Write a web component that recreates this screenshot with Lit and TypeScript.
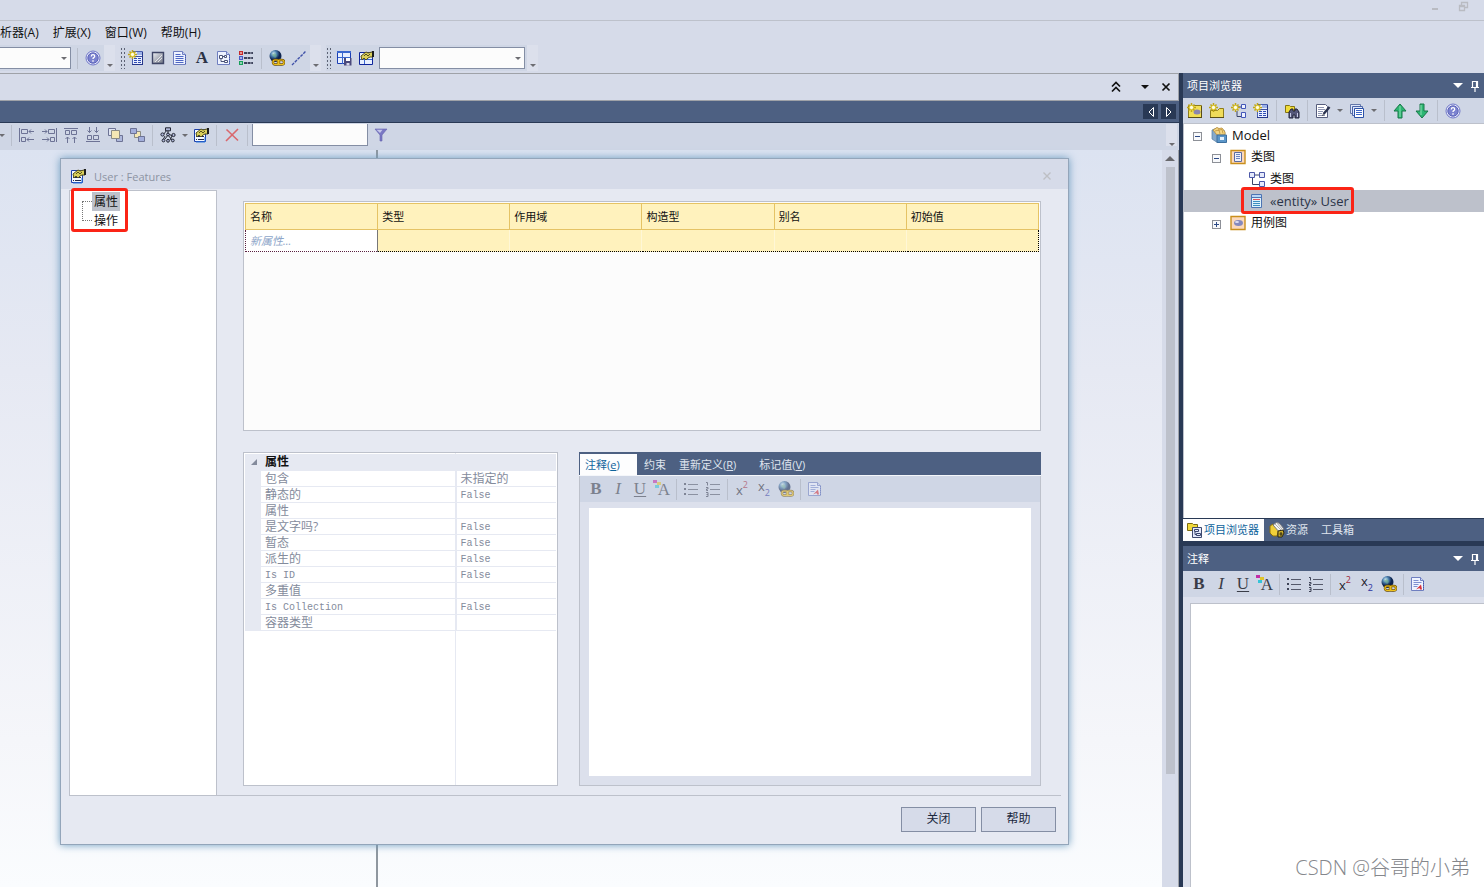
import { LitElement, html, svg, css, TemplateResult } from "lit";
import { customElement, property } from "lit/decorators.js";
import { classMap } from "lit/directives/class-map.js";

const sun = svg`<path d="M4.500 0v9M0 4.500h9M1.500 1.500l6 6M7.500 1.500l-6 6" stroke="#bfa516" stroke-width="1.500"/><circle cx="4.500" cy="4.500" r="2.200" fill="#fffde0" stroke="#d8c020"/>`;
const sheet = svg`<path d="M1.500 1.500h9l3 3v10h-12z" fill="#eef3ff" stroke="#6f7fc0"/><path d="M10.500 1.500v3h3" fill="#c8d2f4" stroke="#6f7fc0"/><path d="M13.500 5v10" stroke="#4459b0" stroke-dasharray="1 1"/>`;
const hand = svg`<path d="M3 6l5-4 2 1 4-1h1v5h-3l-2 1-2 2-2-2-2 2z" fill="#d9cf5c" stroke="#55501c"/><path d="M6 6l2-2 2 2 2-2" fill="none" stroke="#55501c"/><path d="M15 1v6" stroke="#1c1c1c" stroke-width="2"/>`;

const ICONS: Record<string, TemplateResult> = {
  help: svg`<circle cx="8" cy="8" r="7" fill="#e7eafb" stroke="#6f76c8"/><circle cx="8" cy="8" r="5.200" fill="#7b82cf" stroke="#5a62b8"/><path d="M6.300 6.500q0-1.800 1.700-1.800t1.700 1.600q0 .8-.9 1.300t-.8 1.400" fill="none" stroke="#fff" stroke-width="1.300"/><path d="M7.300 10.300h1.400v1.400H7.300z" fill="#fff"/>`,
  newClass: svg`<path d="M4.500 1.500h10v13h-10z" fill="#e9efff" stroke="#4a5fae"/><path d="M9 2h5v3H9z" fill="#9db2e8"/><path d="M5 6.500h9" stroke="#3c50a0"/><path d="M6 8.500h3M10 8.500h3M6 10.500h3M10 10.500h3M6 12.500h3M10 12.500h3" stroke="#2f4cb4"/><path d="M14.500 2v13M4 14.500h11" stroke="#26378a"/>${sun}`,
  shade: svg`<defs><linearGradient id="g" x2="1" y2="1"><stop stop-color="#f2f4f8"/><stop offset="1" stop-color="#6a7080"/></linearGradient></defs><path d="M2.500 2.500h11v11h-11z" fill="url(#g)" stroke="#3f4666" stroke-width="1.400"/><path d="M5 12l7-7M8 12l4-4" stroke="#fff" stroke-width=".7"/>`,
  sheet: svg`${sheet}<path d="M3.500 4.500h5M3.500 6.500h8M3.500 8.500h8M3.500 10.500h8M3.500 12.500h8" stroke="#4d66c4"/>`,
  diagramSheet: svg`${sheet}<path d="M3.500 5.500h3v3h-3zM8.500 5.500h2v2h-2zM8.500 10.500h3v2h-3zM5 8.500v3h3.500M6.500 6.500h2" fill="#fff" stroke="#4b5478"/>`,
  legend: svg`<path d="M1 1h4v4H1z" fill="#c62828"/><path d="M1 6h4v4H1z" fill="#4a5dc8"/><path d="M1 11h4v4H1z" fill="#16a05a"/><path d="M2.300 2.300h1.400v1.400H2.300zM2.300 7.300h1.400v1.400H2.300zM2.300 12.300h1.400v1.400H2.300z" fill="#fff"/><path d="M6 3h9M6 8h9M6 13h9" stroke="#3e445c" stroke-width="2" stroke-dasharray="3 .6"/>`,
  globe: svg`<defs><radialGradient id="e" cx=".35" cy=".3"><stop stop-color="#d4ecf4"/><stop offset=".5" stop-color="#4a7fae"/><stop offset="1" stop-color="#0d2450"/></radialGradient></defs><circle cx="6.500" cy="6" r="6" fill="url(#e)"/><path d="M3 5q2-3 4-1t-1 4z" fill="#6fb08c" opacity=".6"/><rect x="4" y="10" width="6" height="4.500" rx="2" fill="none" stroke="#6b4d06" stroke-width="2.400"/><rect x="9" y="10" width="6" height="4.500" rx="2" fill="none" stroke="#6b4d06" stroke-width="2.400"/><rect x="4" y="10" width="6" height="4.500" rx="2" fill="none" stroke="#f0c21c" stroke-width="1.200"/><rect x="9" y="10" width="6" height="4.500" rx="2" fill="none" stroke="#f0c21c" stroke-width="1.200"/>`,
  line: svg`<path d="M1 15L15 1" stroke="#3f51a8" stroke-width="1.400" stroke-dasharray="3 1"/>`,
  layoutSave: svg`<path d="M1.500 1.500h13v12h-13z" fill="#e8f0ff" stroke="#1c3fb4"/><path d="M1 1h14v2H1zM6 2h1v12H6zM2 7h12v1H2z" fill="#3a67cf"/><path d="M8 8h7.500v7.500H8z" fill="#4a4a7c"/><path d="M10 8h4v3h-4z" fill="#fff"/><path d="M10.500 13h3v2.500h-3z" fill="#d8d8ea"/>`,
  layoutHand: svg`<path d="M1.500 2.500h13v12h-13z" fill="#e8f0ff" stroke="#10269c"/><path d="M6 8h1v6H6zM2 9h12v1H2z" fill="#3a67cf"/>${hand}`,
  props: svg`<path d="M1.500 2.500h11v12h-11z" fill="#f4f8ff" stroke="#1c3fa8"/><path d="M3 9.500h1M3 12.500h1M5 9.500h6M5 12.500h6" stroke="#222a4c"/><path d="M12 10v5H3" fill="none" stroke="#2b76e0"/>${hand}`,
  alignLeft: svg`<path d="M.5 1v14" stroke="#6d7395"/><path d="M2.500 2.500h6v4h-6zM2.500 10.500h4v4h-4zM15 4.500h-5M12 2.500l-2 2 2 2M15 12.500h-7M10 10.500l-2 2 2 2" fill="none" stroke="#6d7395"/>`,
  alignRight: svg`<path d="M15.500 1v14" stroke="#6d7395"/><path d="M7.500 2.500h6v4h-6zM9.500 10.500h4v4h-4zM1 4.500h5M4 2.500l2 2-2 2M1 12.500h7M6 10.500l2 2-2 2" fill="none" stroke="#6d7395"/>`,
  alignTop: svg`<path d="M1 1.500h14" stroke="#6d7395"/><path d="M2.500 3.500h4v4h-4zM8.500 3.500h5v4h-5zM4.500 16v-6M2.500 12l2-2 2 2M11.500 16v-6M9.500 12l2-2 2 2" fill="none" stroke="#6d7395"/>`,
  alignBottom: svg`<path d="M1 14.500h14" stroke="#6d7395"/><path d="M2.500 8.500h4v4h-4zM8.500 8.500h5v4h-5zM4.500 0v5.500M2.500 3.500l2 2 2-2M11.500 0v5.500M9.500 3.500l2 2 2-2" fill="none" stroke="#6d7395"/>`,
  front: svg`<path d="M1.500 1.500h7v7h-7z" fill="#dfe4f2" stroke="#6d7395"/><path d="M9.500 8.500h6v6h-6z" fill="#aeb8dc" stroke="#6d7395"/><path d="M4.500 3.500h8v8h-8z" fill="#f4e7b4" stroke="#8a8b85"/>`,
  back: svg`<path d="M5.500 4.500h6v6h-6z" fill="#f4e7b4" stroke="#8a8b85"/><path d="M1.500 1.500h6v5h-6zM9.500 9.500h6v5h-6z" fill="#a2aedb" stroke="#6d7395"/>`,
  tree: svg`<path d="M7 3L3 8M8 3v5l-3 4M8 7l5 2M5 9l-2 4M12 9l-2 4M8 8l4 5" stroke="#222633" fill="none"/><g fill="#aeb6d8" stroke="#222633"><path d="M5.500.8h5v3h-5z"/><circle cx="2.500" cy="7.500" r="1.600"/><circle cx="13.500" cy="8" r="1.600"/><circle cx="8" cy="7.500" r="1.400"/><circle cx="3.500" cy="13.500" r="1.400"/><circle cx="8" cy="13.800" r="1.400"/><circle cx="12.800" cy="13.500" r="1.400"/></g>`,
  remove: svg`<path d="M2.500 2.500l11.500 11M14 2L2 14" stroke="#d9676d" stroke-width="1.600"/>`,
  filter: svg`<path d="M2 2h12L9 8v6H7V8z" fill="#7a78c4" stroke="#6563ae" stroke-width=".6"/><path d="M3.500 2.800h6L7 6z" fill="#c7c8ea"/>`,
  newModel: svg`<path d="M1.500 2.500h13v12h-13z" fill="#f2df55" stroke="#8d7c1c"/><ellipse cx="10" cy="9" rx="3.500" ry="2.500" fill="#8b86b0"/><path d="M1 14.500h14M14.500 3v12" stroke="#5a4e16"/>${sun}`,
  newPackage: svg`<path d="M1.500 7.500h7l2-2h4v9h-13z" fill="#f0dc5a" stroke="#8d7c1c"/><path d="M1 14.500h14" stroke="#5a4e16"/>${sun}`,
  newDiagram: svg`<path d="M7 4h4M6 8v5.500h4" stroke="#3b4468" fill="none"/><path d="M10.500 1.500h4v4h-4zM10.500 9.500h4v5h-4z" fill="#eef2ff" stroke="#4256b8"/>${sun}`,
  find: svg`<path d="M1.500 2.500h4l1 1h4v6h-9z" fill="#f0dc3a" stroke="#857512"/><path d="M5 15V9l2-3h2v2h2V6h2l2 3v6h-4v-3H9v3z" fill="#55587a" stroke="#20223a"/><path d="M6.500 10v4M13.500 10v4" stroke="#c5c8e4"/>`,
  edit: svg`<path d="M1.500 1.500h9l2 2v11h-11z" fill="#fff" stroke="#565d7c"/><path d="M3 4.500h6M3 6.500h7M3 8.500h5M3 10.500h4M3 12.500h7" stroke="#8e95b2"/><path d="M14.500 4l-6 7" stroke="#2b3350" stroke-width="2.400"/><path d="M7 13l1-2 1 1z" fill="#222"/>`,
  stack: svg`<path d="M1.500 1.500h10v9h-10z" fill="#dfe7fb" stroke="#6377a8"/><path d="M3.500 3.500h10v9h-10z" fill="#dfe7fb" stroke="#4c66a8"/><path d="M5.500 5.500h9v9h-9z" fill="#fff" stroke="#2d52a8"/><path d="M7 7.500h6M7 9.500h6M7 11.500h6" stroke="#3c66c8"/>`,
  up: svg`<path d="M8 1l6 7h-4v7H6V8H2z" fill="#2cb673" stroke="#187848"/><path d="M8 3v11" stroke="#8ce0b4"/>`,
  down: svg`<path d="M8 15L2 8h4V1h4v7h4z" fill="#2cb673" stroke="#187848"/><path d="M7 2v10" stroke="#8ce0b4"/>`,
  model: svg`<path d="M1 3l5-2 2 1v2l5-1 1 4-7 1v8L1 12z" fill="#86a9ca" stroke="#4f7ba5" stroke-width=".7"/><path d="M2 3l4-2.500 2 1 3-.5 3 4v3H6z" fill="#f3d583" stroke="#b78a30" stroke-width=".8"/><path d="M4 4l4-1 1 4M7 3l4-.5 1 4" fill="none" stroke="#b78a30" stroke-width=".7"/><path d="M6 8h9.500v7.500H6z" fill="#5b96c9" stroke="#3c6f9e"/><path d="M9 10h4v3H9z" fill="#e5f0fa"/>`,
  packageClass: svg`<path d="M1 1.500h14v13H1z" fill="#fbd9bd" stroke="#c98f1c" stroke-width="1.400"/><path d="M4.500 3.500h7v9h-7z" fill="#eef1fb" stroke="#5c6ca2"/><path d="M6 5.500h4M6 7.500h4M6 9.500h4" stroke="#6c84c0"/>`,
  packageUse: svg`<path d="M1 1.500h14v13H1z" fill="#fbd9bd" stroke="#c98f1c" stroke-width="1.400"/><ellipse cx="8.500" cy="8" rx="4.500" ry="3" fill="#8589bd"/><ellipse cx="7" cy="7" rx="2" ry="1" fill="#dfe0f5"/>`,
  diagram: svg`<path d="M6 4h4M3.500 7v6.500H10" stroke="#3b4468" fill="none"/><path d="M.5 1.500h5v5h-5zM10.500 1.500h5v5h-5zM10.500 10.500h5v5h-5z" fill="#e4e9fb" stroke="#4c58a8"/>`,
  element: svg`<path d="M2.500 1.500h10v13h-10z" fill="#dff2fb" stroke="#4c74b4"/><path d="M3 2h9v2H3z" fill="#b9d6f4"/><path d="M3 4.500h9" stroke="#4c74b4"/><path d="M4 6.500h7" stroke="#e0525a"/><path d="M4 8.500h7M4 10.500h7M4 12.500h7" stroke="#3f8fc0"/>`,
  browser: svg`<path d="M.5 1.500h5l1 1h4v6H.5z" fill="#f0d83a" stroke="#7a6a10"/><path d="M5.500 5.500h9v10h-9z" fill="#e4e9fb" stroke="#3f4a70"/><path d="M7.500 7.500h4v2h-4zM9.500 11.500h4v2h-4zM8 10v2.500h1" fill="none" stroke="#39456e"/>`,
  resources: svg`<path d="M1 4l3-2 6 5-2 7H4L1 11z" fill="#f0cf3a" stroke="#8a6e10"/><path d="M4 3l4-3 3 2 4 5-4 4z" fill="#f6f6f2" stroke="#77777c"/><path d="M6 2l6 6M8 1l5 6" stroke="#9a9aa0" stroke-width=".8"/><path d="M9 9l5-1 1 3-2 4H9z" fill="#c9ac28" stroke="#2a2613"/><path d="M12 10v4M10.500 12h3" stroke="#2a2613"/>`,
  bullets: svg`<path d="M1 2h2v2H1zM1 7h2v2H1zM1 12h2v2H1z" fill="#3e4356"/><path d="M5 3.500h10M5 8.500h10M5 13.500h10" stroke="#55596a"/>`,
  numbers: svg`<path d="M1 1.500h1.500v3M1 6.500h2v1.500H1.500v1.500H3M1 11.500h2v4H1M1.500 13.500H3" fill="none" stroke="#3e4356"/><path d="M5 3.500h10M5 8.500h10M5 13.500h10" stroke="#55596a"/>`,
  doc: svg`${sheet}<path d="M3.500 4.500h5M3.500 6.500h8M3.500 8.500h5M3.500 10.500h4" stroke="#7f90d0"/><path d="M6 13.500l5-5 1 5h-2l-.5-1.500z" fill="#d8323a"/>`,
  swatches: svg`<path d="M0 0h4v3H0z" fill="#c22ca8"/><path d="M4 2h4v3H4z" fill="#e0c52c"/><path d="M2 5h4v3H2z" fill="#35c3d8"/>`,
  pin: svg`<path d="M5.500 3.500h5v6h-5zM4 9.500h8M8 10v4M9.500 4v5" fill="none" stroke="#fff" stroke-width="1.200"/>`,
  chevrons: svg`<path d="M4 7.500l4-4 4 4M4 12.500l4-4 4 4" fill="none" stroke="#111" stroke-width="1.700"/>`,
  close: svg`<path d="M4.500 4.500l7 7M11.500 4.500l-7 7" stroke="#111" stroke-width="1.700"/>`,
  closeThin: svg`<path d="M4.500 4.500l7 7M11.500 4.500l-7 7" stroke="#bdbfc4" stroke-width="1.400"/>`,
  minimize: svg`<path d="M5 10h6" stroke="#b9bbc2" stroke-width="2"/>`,
  restore: svg`<path d="M6.500 6V3.500h6v5H10M4.500 6.500h5v5h-5zM4.500 7.500h5" fill="none" stroke="#b9bbc2" stroke-width="1.300"/>`,
  prev: svg`<path d="M10.500 3.500v9L6 8z" fill="none" stroke="#fff"/>`,
  next: svg`<path d="M5.500 3.500v9L10 8z" fill="none" stroke="#fff"/>`,
};

const icon = (name: string) => html`<svg class="icon" viewBox="0 0 16 16" width="16" height="16" fill="none" aria-hidden="true">${ICONS[name]}</svg>`;
const tool = (name: string, label: string) => html`<button class="tool" aria-label=${label}>${icon(name)}</button>`;
const arrow = () => html`<button class="drop" aria-label="更多"><i class="caret"></i></button>`;
const sep = () => html`<span class="sep"></span>`;

const shared = css`
  * { box-sizing: border-box; }
  button { font: inherit; color: inherit; background: none; border: 0; padding: 0; margin: 0; }
  .icon { display: block; flex: none; }
  .tool { width: 22px; height: 22px; display: flex; align-items: center; justify-content: center; flex: none; }
  .drop { width: 11px; height: 22px; display: flex; align-items: center; justify-content: center; flex: none; }
  .caret { border: 3px solid transparent; border-top-color: #6d6d72; border-bottom: 0; }
  .sep { width: 1px; height: 21px; margin: 0 4px; background: #b9bfcc; flex: none; }
`;

@customElement("rich-text-bar")
class RichTextBar extends LitElement {
  @property({ type: Boolean, reflect: true }) muted = false;
  static styles = [shared, css`
    :host { display: flex; align-items: center; height: 26px; padding-left: 5px; background: #cfd6e5; font-family: "Liberation Serif", serif; color: #3a3d48; flex: none; }
    :host([muted]) .tool { opacity: 0.55; }
    .sep { margin: 0 3px; }
    .glyph { font-size: 17px; line-height: 20px; }
    .bold { font-weight: bold; }
    .italic { font-style: italic; }
    .under { text-decoration: underline; text-underline-offset: 2px; }
    .script { display: flex; font: 13px/16px "Open Sans", sans-serif; color: #1f222b; }
    .script sup, .script sub { font-size: 9px; line-height: 10px; }
    .script sup { color: #a02838; align-self: flex-start; }
    .script sub { color: #2c35a0; align-self: flex-end; padding-top: 8px; }
    .low { padding-top: 2px; }
    .high { line-height: 12px; }
    .color { position: relative; }
    .color .icon { position: absolute; left: 2px; top: 2px; }
    .color .glyph { padding-left: 4px; padding-top: 2px; }
  `];
  render() {
    return html`
      <button class="tool" aria-label="粗体"><span class="glyph bold">B</span></button>
      <button class="tool" aria-label="斜体"><span class="glyph italic">I</span></button>
      <button class="tool" aria-label="下划线"><span class="glyph under">U</span></button>
      <button class="tool color" aria-label="颜色">${icon("swatches")}<span class="glyph">A</span></button>
      ${sep()}${tool("bullets", "项目符号")}${tool("numbers", "编号")}${sep()}
      <button class="tool" aria-label="上标"><span class="script"><span class="low">x</span><sup>2</sup></span></button>
      <button class="tool" aria-label="下标"><span class="script"><span class="high">x</span><sub>2</sub></span></button>
      ${tool("globe", "链接")}${sep()}${tool("doc", "文档")}
    `;
  }
}

interface TreeNode { level: number; icon: string; label: string; toggle?: "minus" | "plus"; selected?: boolean; }

@customElement("project-panels")
class ProjectPanels extends LitElement {
  private nodes: TreeNode[] = [
    { level: 0, icon: "model", label: "Model", toggle: "minus" },
    { level: 1, icon: "packageClass", label: "类图", toggle: "minus" },
    { level: 2, icon: "diagram", label: "类图" },
    { level: 2, icon: "element", label: "«entity» User", selected: true },
    { level: 1, icon: "packageUse", label: "用例图", toggle: "plus" },
  ];
  static styles = [shared, css`
    :host { display: flex; flex-direction: column; min-height: 0; background: #293955; }
    .panel { display: flex; flex-direction: column; min-height: 0; }
    .browser { flex: 468 1 0; }
    .notes { flex: 341 1 0; margin-top: 5px; background: #dce0ec; }
    .head { height: 25px; flex: none; display: flex; align-items: center; padding: 0 1px 0 4px; background: #4d6082; color: #fff; }
    .head h2 { font-size: 11px; font-weight: normal; margin: 0; flex: 1; }
    .head .caret { border-width: 5px; border-top-color: #fff; border-bottom: 0; }
    .head .tool { width: 17px; }
    .tools { height: 26px; flex: none; display: flex; align-items: center; padding-left: 1px; background: #cfd6e5; border-bottom: 1px solid #bdc1cb; }
    .tools .drop { width: 12px; }
    .tree { list-style: none; margin: 0; padding: 0; flex: 1; min-height: 0; background: #fff; border-left: 1px solid #bdc1cb; }
    .node { display: flex; align-items: center; height: 22px; padding-left: 9px; position: relative; font-size: 13px; line-height: 20px; }
    .node:lang(zh) { font-size: 12px; }
    .level1 { padding-left: 28px; }
    .level2 { padding-left: 47px; }
    .selected { background: #bdc1cb; color: #2b3448; }
    .toggle { width: 9px; height: 9px; border: 1px solid #8d9097; background: #f8f9fb; display: block; margin-right: 9px; margin-top: 2px; flex: none; background-image: linear-gradient(#2d4a86, #2d4a86); background-size: 5px 1px; background-position: center; background-repeat: no-repeat; }
    .plus { background-image: linear-gradient(#2d4a86, #2d4a86), linear-gradient(#2d4a86, #2d4a86); background-size: 5px 1px, 1px 5px; }
    .blank { border-color: transparent; background: none; }
    .label { margin-left: 5px; white-space: nowrap; }
    .mark { position: absolute; left: 57px; top: -3px; width: 113px; height: 27px; border: 3px solid #fb2416; border-radius: 3px; }
    .tabs { display: flex; height: 23px; flex: none; background: #4d6082; border-top: 1px solid #293955; color: #dfe4ee; font-size: 11px; }
    .tab { display: flex; align-items: center; gap: 1px; padding: 0 8px 0 5px; }
    .active { background: #fdfdfe; color: #0e639c; padding: 0 5px 0 4px; }
    .area { flex: 1; min-height: 0; margin: 6px 0 0 7px; border: 1px solid #bdc1cb; border-right: 0; border-bottom: 0; border-radius: 0; resize: none; background: #fff; padding: 4px; outline: 0; }
  `];
  private head(title: string) {
    return html`<header class="head"><h2>${title}</h2><button class="tool" aria-label="选项"><i class="caret"></i></button><button class="tool" aria-label="固定">${icon("pin")}</button></header>`;
  }
  render() {
    return html`
      <section class="panel browser">
        ${this.head("项目浏览器")}
        <div class="tools">
          ${tool("newModel", "新建模型")}${tool("newPackage", "新建包")}${tool("newDiagram", "新建图")}${tool("newClass", "新建元素")}
          ${sep()}${tool("find", "查找")}${sep()}${tool("edit", "编辑")}${arrow()}${tool("stack", "文档")}${arrow()}
          ${sep()}${tool("up", "上移")}${tool("down", "下移")}${sep()}${tool("help", "帮助")}
        </div>
        <ul class="tree">
          ${this.nodes.map((n) => html`<li lang=${/[a-z]/.test(n.label) ? "en" : "zh"} class=${classMap({ node: true, ["level" + n.level]: true, selected: !!n.selected })}>
            <span class=${classMap({ toggle: true, plus: n.toggle === "plus", blank: !n.toggle })}></span>
            ${icon(n.icon)}<span class="label">${n.label}</span>
            ${n.selected ? html`<span class="mark"></span>` : null}
          </li>`)}
        </ul>
        <nav class="tabs">
          <button class="tab active">${icon("browser")}项目浏览器</button>
          <button class="tab">${icon("resources")}资源</button>
          <button class="tab">工具箱</button>
        </nav>
      </section>
      <section class="panel notes">
        ${this.head("注释")}
        <rich-text-bar></rich-text-bar>
        <textarea class="area" aria-label="注释"></textarea>
      </section>
    `;
  }
}

@customElement("features-dialog")
class FeaturesDialog extends LitElement {
  private columns = ["名称", "类型", "作用域", "构造型", "别名", "初始值"];
  private props: [string, string][] = [
    ["包含", "未指定的"], ["静态的", "False"], ["属性", ""], ["是文字吗?", "False"], ["暂态", "False"],
    ["派生的", "False"], ["Is ID", "False"], ["多重值", ""], ["Is Collection", "False"], ["容器类型", ""],
  ];
  static styles = [shared, css`
    :host { display: flex; flex-direction: column; background: #e6e9f2; border: 1px solid #93a5ba; box-shadow: 0 0 8px #6d9cc0; }
    .title { height: 30px; flex: none; display: flex; align-items: center; padding: 4px 10px 0 9px; gap: 8px; background: #d6dbe9; color: #8d94a3; }
    .title h1 { font-size: 11px; font-weight: normal; margin: 0; padding-top: 2px; flex: 1; }
    .body { flex: 1; min-height: 0; display: flex; margin: 1px 7px 0 8px; border-bottom: 1px solid #bdc1cb; }
    .side { width: 148px; flex: none; background: #fff; border: 1px solid #bdc1cb; border-bottom: 0; position: relative; }
    .items { list-style: none; margin: 1px 0 0 12px; padding: 0; position: relative; }
    .items li { height: 19px; display: flex; align-items: center; }
    .items li::before { content: ""; width: 10px; border-top: 1px dotted #777; }
    .items::before { content: ""; position: absolute; left: 0; top: 10px; height: 19px; border-left: 1px dotted #777; }
    .items button { padding: 0 2px; height: 19px; line-height: 19px; }
    .items .on { background: #bdc1cb; }
    .mark { position: absolute; left: 1px; top: -3px; width: 57px; height: 44px; border: 3px solid #fb2416; border-radius: 3px; }
    .main { flex: 1; min-width: 0; display: flex; flex-direction: column; gap: 21px; padding: 11px 20px 9px 26px; }
    .grid { height: 230px; border: 1px solid #bdc1cb; background: #fcfcfc; padding: 1px; }
    table { border-collapse: collapse; table-layout: fixed; width: 100%; }
    .attrs { font-size: 11px; }
    .attrs th { height: 26px; padding: 0 4px; text-align: left; font-weight: normal; background: #fff2bd; border: 1px solid #e5c365; }
    .attrs td { height: 22px; padding: 0 4px; background: #fff2bd; border-bottom: 1px dotted #000; border-top: 1px dotted #000; border-right: 1px solid #fff7d6; }
    .attrs td:last-child { border-right: 1px dotted #000; }
    .attrs .new { background: #fff; border: 1px dotted #5a2040; border-right: 1px solid #777; }
    .new input { width: 100%; border: 0; padding: 0; outline: 0; font: italic 11px/16px "Open Sans", "Noto Sans CJK SC", sans-serif; background: none; display: block; }
    .new input::placeholder { color: #8ea6c9; opacity: 1; }
    .lower { flex: 1; min-height: 0; display: flex; gap: 21px; }
    .props { width: 315px; flex: none; border: 1px solid #bdc1cb; background: linear-gradient(#e6e9f2, #e6e9f2) 211px 0 / 1px 100% no-repeat #fff; padding: 1px; color: #848b9c; }
    .props td, .props th { height: 16px; padding: 0 0 0 4px; text-align: left; font-weight: normal; border-bottom: 1px solid #e6e9f2; border-right: 1px solid #e6e9f2; white-space: nowrap; }
    .props td { border-right: 0; }
    .props .gutter { width: 16px; background: #e6e9f2; padding: 0; }
    .props .name { width: 195px; }
    .props .group { background: #e6e9f2; color: #111; font-weight: bold; }
    .cell { display: block; height: 15px; line-height: 15px; overflow: visible; }
    .mono { font: 10px/17px "Liberation Mono", monospace; }
    .tri { display: block; margin-left: 6px; width: 0; border-left: 6px solid transparent; border-bottom: 6px solid #848b9c; }
    .notes { flex: 1; min-width: 0; display: flex; flex-direction: column; background: #dce0ec; border: 1px solid #bdc1cb; border-top: 0; }
    .tabs { height: 24px; flex: none; display: flex; margin: 0 -1px; padding: 2px 0 0 1px; background: #4d6082; color: #dfe4ee; border-bottom: 1px solid #f4f6fa; font-size: 11px; }
    .tab { padding: 0 7px; }
    .tab:nth-child(3) { padding: 0 16px 0 6px; }
    .active { min-width: 57px; text-align: left; background: #fdfdfe; color: #0e639c; padding: 0 5px; }
    .area { flex: 1; min-height: 0; margin: 6px 9px 9px; border: 0; padding: 4px; resize: none; outline: 0; background: #fff; }
    .foot { height: 48px; flex: none; display: flex; justify-content: flex-end; align-items: center; gap: 5px; padding: 0 12px 2px; }
    .foot button { width: 75px; height: 25px; border: 1px solid #848ea4; background: #d6dbe9; color: #1b293e; }
  `];
  private cell(text: string) {
    return html`<span class=${classMap({ cell: true, mono: /^[\w ]+$/.test(text) })}>${text}</span>`;
  }
  render() {
    return html`
      <header class="title">${icon("props")}<h1>User : Features</h1><button class="tool" aria-label="关闭窗口">${icon("closeThin")}</button></header>
      <div class="body">
        <nav class="side">
          <ul class="items"><li><button class="on">属性</button></li><li><button>操作</button></li></ul>
          <span class="mark"></span>
        </nav>
        <div class="main">
          <div class="grid">
            <table class="attrs">
              <thead><tr>${this.columns.map((c) => html`<th>${c}</th>`)}</tr></thead>
              <tbody><tr><td class="new"><input aria-label="名称" placeholder="新属性..." /></td>${this.columns.slice(1).map(() => html`<td></td>`)}</tr></tbody>
            </table>
          </div>
          <div class="lower">
            <div class="props">
              <table>
                <colgroup><col class="gutter" /><col class="name" /><col /></colgroup>
                <tbody>
                  <tr><td class="gutter"><i class="tri"></i></td><th class="group" colspan="2">${this.cell("属性")}</th></tr>
                  ${this.props.map(([k, v]) => html`<tr><td class="gutter"></td><th>${this.cell(k)}</th><td>${this.cell(v)}</td></tr>`)}
                </tbody>
              </table>
            </div>
            <section class="notes">
              <nav class="tabs">
                <button class="tab active">注释(<u>e</u>)</button><button class="tab">约束</button><button class="tab">重新定义(<u>R</u>)</button><button class="tab">标记值(<u>V</u>)</button>
              </nav>
              <rich-text-bar muted></rich-text-bar>
              <textarea class="area" aria-label="注释"></textarea>
            </section>
          </div>
        </div>
      </div>
      <footer class="foot"><button>关闭</button><button>帮助</button></footer>
    `;
  }
}

@customElement("app-root")
class AppRoot extends LitElement {
  static styles = [shared, css`
    :host { display: flex; flex-direction: column; height: 100vh; overflow: hidden; position: relative; background: #d6dbe9; color: #111; font: 12px/16px "Open Sans", "Noto Sans CJK SC", sans-serif; }
    .caption { height: 21px; flex: none; display: flex; justify-content: flex-end; gap: 6px; padding: 0 10px 6px; border-bottom: 1px solid #bdc1cb; }
    .caption .tool { height: 14px; }
    .menu { height: 24px; flex: none; display: flex; align-items: center; gap: 14px; white-space: nowrap; }
    .bars { height: 28px; flex: none; display: flex; align-items: center; gap: 5px; padding-bottom: 2px; }
    .bar { height: 26px; display: flex; align-items: center; background: #cfd6e5; }
    .bar .drop { background: #dce0ec; align-items: flex-end; padding-bottom: 4px; height: 26px; }
    .grip { width: 5px; height: 22px; background: radial-gradient(circle, #5c6274 1px, transparent 1px) 0 0 / 3px 4px; flex: none; }
    .combo { height: 22px; position: relative; display: flex; align-items: center; }
    .combo select { appearance: none; width: 100%; height: 22px; border: 1px solid #848ea4; border-radius: 0; background: #fcfcfc; }
    .combo .caret { position: absolute; right: 4px; top: 10px; }
    .first { width: 71px; margin-right: 2px; }
    .first select { border-left: 0; }
    .second { width: 146px; margin: 0 2px; }
    .pad { padding-left: 2px; }
    .work { flex: 1; min-height: 0; display: grid; grid-template-columns: minmax(0, 1fr) 301px; }
    .left { display: flex; flex-direction: column; min-height: 0; border-right: 4px solid #293955; }
    .strip { height: 28px; flex: none; display: flex; align-items: center; justify-content: flex-end; gap: 1px; padding-right: 2px; border: 1px solid #9fa2a8; border-left: 0; }
    .strip .caret { border-width: 4px; border-top-color: #111; border-bottom: 0; }
    .strip .tool { width: 20px; }
    .strip .tool:first-child { margin-right: 8px; }
    .doctabs { height: 22px; flex: none; display: flex; justify-content: flex-end; align-items: center; gap: 3px; padding-right: 3px; background: #4d6082; border-bottom: 1px solid #293955; }
    .doctabs .tool { width: 15px; height: 15px; background: #293955; overflow: hidden; }
    .tools { height: 27px; flex: none; display: flex; align-items: center; padding: 0 2px 3px 0; background: #cfd6e5; }
    .edge { width: 7px; justify-content: flex-start; }
    .edge .caret { margin-left: -1px; }
    .find { width: 116px; height: 22px; border: 1px solid #848ea4; border-top: 0; background: #fcfcfc; border-radius: 0; margin-right: 2px; outline: 0; }
    .more { margin-left: auto; background: #dce0ec; align-items: flex-end; }
    .stage { flex: 1; min-height: 0; display: flex; }
    .canvas { flex: 1; min-width: 0; position: relative; background: linear-gradient(90deg, #8f979f, #8f979f) 376px 0 / 2px 100% no-repeat, linear-gradient(#dce3f1, #e6e9f3 30%, #f5f6fa 80%, #fafcfe); }
    .dialog { position: absolute; left: 60px; right: 93px; top: 8px; bottom: 42px; }
    .scroll { width: 17px; flex: none; padding: 6px 4px 0; background: #d6dbe9; border-right: 1px solid #a0a3a8; display: flex; flex-direction: column; align-items: center; }
    .scroll .upper { border: 5px solid transparent; border-bottom-color: #68686c; border-top: 0; margin-bottom: 6px; }
    .thumb { width: 9px; height: 83%; background: #bdc1cb; }
    .watermark { position: absolute; right: 14px; bottom: 5px; font-size: 20px; line-height: 28px; font-weight: 300; color: #85878c; pointer-events: none; }
    .letter { font: bold 17px/20px "Liberation Serif", serif; color: #2c3346; }
  `];
  render() {
    return html`
      <header class="caption">${tool("minimize", "最小化")}${tool("restore", "还原")}</header>
      <nav class="menu">${["析器(A)", "扩展(X)", "窗口(W)", "帮助(H)"].map((m) => html`<button>${m}</button>`)}</nav>
      <div class="bars">
        <div class="bar">
          <label class="combo first"><select aria-label="视图"></select><i class="caret"></i></label>
          ${sep()}${tool("help", "帮助")}${arrow()}
        </div>
        <div class="bar"><span class="grip"></span>
          ${tool("newClass", "新建元素")}${tool("shade", "图像")}${tool("sheet", "注释")}
          <button class="tool" aria-label="文字"><span class="letter">A</span></button>
          ${tool("diagramSheet", "图注")}${tool("legend", "图例")}${sep()}${tool("globe", "超链接")}${tool("line", "连线")}${arrow()}
        </div>
        <div class="bar"><span class="grip"></span>
          <span class="pad"></span>${tool("layoutSave", "保存布局")}${tool("layoutHand", "布局")}
          <label class="combo second"><select aria-label="布局名称"></select><i class="caret"></i></label>${arrow()}
        </div>
      </div>
      <main class="work">
        <section class="left">
          <div class="strip">${tool("chevrons", "折叠")}<button class="tool" aria-label="列表"><i class="caret"></i></button>${tool("close", "关闭")}</div>
          <div class="doctabs">${tool("prev", "上一个")}${tool("next", "下一个")}</div>
          <div class="tools">
            <button class="drop edge" aria-label="更多"><i class="caret"></i></button>${sep()}
            ${tool("alignLeft", "左对齐")}${tool("alignRight", "右对齐")}${tool("alignTop", "上对齐")}${tool("alignBottom", "下对齐")}${tool("front", "置前")}${tool("back", "置后")}
            ${sep()}${tool("tree", "布局")}${arrow()}${tool("props", "属性")}${sep()}${tool("remove", "删除")}${sep()}
            <input class="find" aria-label="筛选" />${tool("filter", "筛选")}
            <button class="drop more" aria-label="更多"><i class="caret"></i></button>
          </div>
          <div class="stage">
            <div class="canvas"><features-dialog class="dialog" role="dialog"></features-dialog></div>
            <div class="scroll"><i class="upper"></i><div class="thumb"></div></div>
          </div>
        </section>
        <project-panels></project-panels>
      </main>
      <div class="watermark">CSDN @谷哥的小弟</div>
    `;
  }
}
